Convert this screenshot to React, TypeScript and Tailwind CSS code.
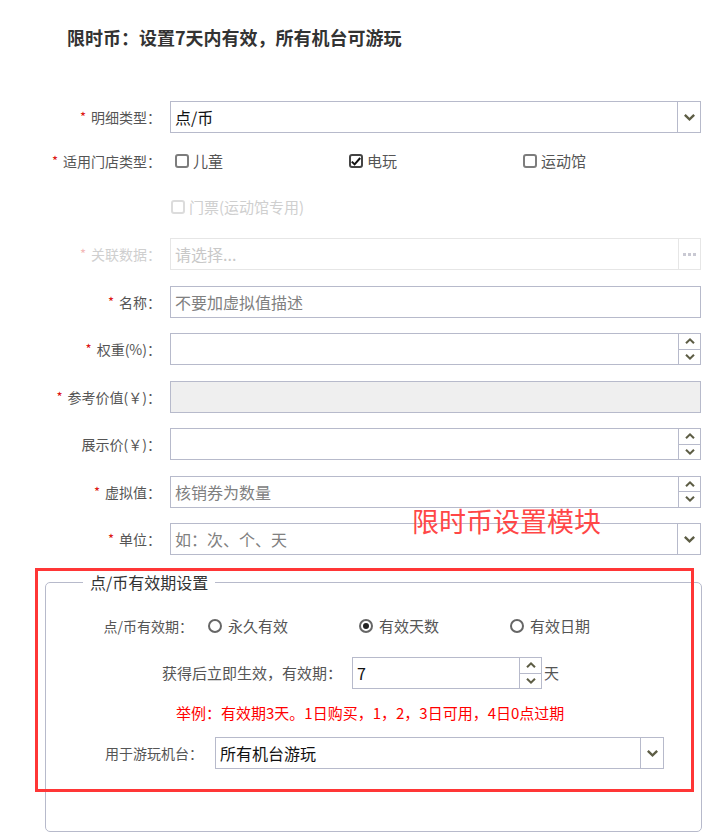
import React from "react";

const BORDER = "border-[#b7bacb]";

function ChevronDown({ w = 11, h = 7 }: { w?: number; h?: number }) {
  return (
    <svg width={w} height={h} viewBox="0 0 11 7">
      <path d="M0 1.7L1.7 0L5.5 3.8L9.3 0L11 1.7L5.5 7Z" fill="#5d5d45" />
    </svg>
  );
}

function ChevronUp({ w = 11, h = 7 }: { w?: number; h?: number }) {
  return (
    <svg width={w} height={h} viewBox="0 0 11 7">
      <path d="M0 5.3L1.7 7L5.5 3.2L9.3 7L11 5.3L5.5 0Z" fill="#5d5d45" />
    </svg>
  );
}

function Label({
  text,
  required,
  disabled,
  width = "w-[161px]",
}: {
  text: string;
  required?: boolean;
  disabled?: boolean;
  width?: string;
}) {
  return (
    <div
      className={`${width} shrink-0 flex justify-end items-center text-[14px] leading-[20px] ${
        disabled ? "text-[#cfcfcf]" : "text-[#555]"
      }`}
    >
      {required && (
        <span
          className={`mr-[5px] text-[13px] ${
            disabled ? "text-[#f3b8b8]" : "text-[#dd1111]"
          }`}
        >
          *
        </span>
      )}
      <span>{text}：</span>
    </div>
  );
}

function Spinner() {
  return (
    <div className={`w-[22px] h-full border-l ${BORDER} flex flex-col shrink-0`}>
      <div className={`flex-1 flex items-center justify-center border-b ${BORDER}`}>
        <ChevronUp w={10} h={6} />
      </div>
      <div className="flex-1 flex items-center justify-center">
        <ChevronDown w={10} h={6} />
      </div>
    </div>
  );
}

function Input({
  value,
  placeholder,
  spinner,
  select,
  gray,
  width = "w-[531px]",
}: {
  value?: string;
  placeholder?: string;
  spinner?: boolean;
  select?: boolean;
  gray?: boolean;
  width?: string;
}) {
  return (
    <div
      className={`${width} h-[32px] border ${BORDER} ${
        gray ? "bg-[#efefef]" : "bg-white"
      } flex items-stretch`}
    >
      <div className="flex-1 flex items-center pl-[4px] text-[16px] leading-[20px]">
        {value ? (
          <span className="text-[#111]">{value}</span>
        ) : placeholder ? (
          <span className="text-[#808080]">{placeholder}</span>
        ) : null}
      </div>
      {spinner && <Spinner />}
      {select && (
        <div className={`w-[23px] border-l ${BORDER} flex items-center justify-center shrink-0`}>
          <ChevronDown />
        </div>
      )}
    </div>
  );
}

function Checkbox({
  label,
  checked,
  disabled,
}: {
  label: string;
  checked?: boolean;
  disabled?: boolean;
}) {
  return (
    <div className="flex items-center">
      <span
        className={`w-[14px] h-[14px] rounded-[3px] border-2 flex items-center justify-center ${
          disabled ? "border-[#dcdcdc]" : checked ? "border-[#444]" : "border-[#7d7d7d]"
        }`}
      >
        {checked && (
          <svg width="10" height="9" viewBox="0 0 10 9">
            <path d="M0.8 4.6L3.6 7.4L9.2 1" stroke="#111" strokeWidth="2" fill="none" />
          </svg>
        )}
      </span>
      <span
        className={`ml-[4px] text-[15px] leading-[20px] ${
          disabled ? "text-[#cfcfcf]" : "text-[#555]"
        }`}
      >
        {label}
      </span>
    </div>
  );
}

function Radio({ label, checked }: { label: string; checked?: boolean }) {
  return (
    <div className="w-[151px] flex items-center">
      <span className="w-[14px] h-[14px] rounded-full border-2 border-[#666] flex items-center justify-center">
        {checked && <span className="w-[6px] h-[6px] rounded-full bg-[#222]" />}
      </span>
      <span className="ml-[6px] text-[15px] leading-[20px] text-[#555]">{label}</span>
    </div>
  );
}

export default function App() {
  return (
    <div className="relative w-[724px] h-[840px] bg-white overflow-hidden font-['Noto_Sans_CJK_SC','Noto_Sans',sans-serif] text-[#555]">
      <div className="pl-[67px] pt-[26px] text-[18px] leading-[22px] font-bold text-[#333]">
        限时币：设置7天内有效，所有机台可游玩
      </div>

      <div className="mt-[53px] flex flex-col gap-[15.5px]">
        <div className="flex items-center h-[32px]">
          <Label text="明细类型" required />
          <div className="ml-[9px]">
            <Input value="点/币" select />
          </div>
        </div>

        <div className="flex items-center h-[25px]">
          <Label text="适用门店类型" required />
          <div className="ml-[14px] flex">
            <div className="w-[174px]">
              <Checkbox label="儿童" />
            </div>
            <div className="w-[174px]">
              <Checkbox label="电玩" checked />
            </div>
            <div className="w-[174px]">
              <Checkbox label="运动馆" />
            </div>
          </div>
        </div>

        <div className="mt-[5.5px] flex items-center h-[25px]">
          <div className="w-[161px] shrink-0" />
          <div className="ml-[10px]">
            <Checkbox label="门票(运动馆专用)" disabled />
          </div>
        </div>

        <div className="mt-[3px] flex items-center h-[32px]">
          <Label text="关联数据" required disabled />
          <div className="ml-[9px] w-[531px] h-[32px] border border-[#e6e6e6] bg-white flex items-stretch">
            <div className="flex-1 flex items-center pl-[4px] text-[16px] leading-[20px] text-[#c8c8c8]">
              请选择...
            </div>
            <div className="w-[22px] border-l border-[#e6e6e6] flex items-center justify-center gap-[2px]">
              <span className="w-[3px] h-[3px] bg-[#c9c9d3]" />
              <span className="w-[3px] h-[3px] bg-[#c9c9d3]" />
              <span className="w-[3px] h-[3px] bg-[#c9c9d3]" />
            </div>
          </div>
        </div>

        <div className="flex items-center h-[32px]">
          <Label text="名称" required />
          <div className="ml-[9px]">
            <Input placeholder="不要加虚拟值描述" />
          </div>
        </div>

        <div className="flex items-center h-[32px]">
          <Label text="权重(%)" required />
          <div className="ml-[9px]">
            <Input spinner />
          </div>
        </div>

        <div className="flex items-center h-[32px]">
          <Label text="参考价值(￥)" required />
          <div className="ml-[9px]">
            <Input gray />
          </div>
        </div>

        <div className="flex items-center h-[32px]">
          <Label text="展示价(￥)" />
          <div className="ml-[9px]">
            <Input spinner />
          </div>
        </div>

        <div className="flex items-center h-[32px]">
          <Label text="虚拟值" required />
          <div className="ml-[9px]">
            <Input placeholder="核销券为数量" spinner />
          </div>
        </div>

        <div className="flex items-center h-[32px]">
          <Label text="单位" required />
          <div className="ml-[9px]">
            <Input placeholder="如：次、个、天" select />
          </div>
        </div>
      </div>

      <fieldset className={`ml-[45px] mt-[17px] w-[657px] border ${BORDER} rounded-[5px] pb-[62px]`}>
        <legend className="ml-[37px] px-[7px] text-[16px] leading-[20px] text-[#333]">
          点/币有效期设置
        </legend>
        <div className="pt-[19px] flex flex-col">
          <div className="flex items-center h-[30px]">
            <Label text="点/币有效期" width="w-[147px]" />
            <div className="ml-[15px] flex">
              <Radio label="永久有效" />
              <Radio label="有效天数" checked />
              <Radio label="有效日期" />
            </div>
          </div>

          <div className="mt-[16px] flex items-center h-[32px]">
            <div className="w-[296px] shrink-0 text-right text-[15px] leading-[20px] text-[#555]">
              获得后立即生效，有效期：
            </div>
            <div className="ml-[10px]">
              <Input value="7" spinner width="w-[190px]" />
            </div>
            <span className="ml-[2px] text-[15px] leading-[20px] text-[#555]">天</span>
          </div>

          <div className="mt-[14px] h-[20px] pl-[130px] text-[15px] leading-[20px] text-[#ff0000]">
            举例：有效期3天。1日购买，1，2，3日可用，4日0点过期
          </div>

          <div className="mt-[14px] flex items-center h-[32px]">
            <Label text="用于游玩机台" width="w-[157px]" />
            <div className="ml-[12px]">
              <Input value="所有机台游玩" select width="w-[449px]" />
            </div>
          </div>
        </div>
      </fieldset>

      <div className="absolute left-[35px] top-[568px] w-[659px] h-[224px] border-[3px] border-[#ff3636]" />
      <div className="absolute left-[412px] top-[504px] text-[27px] leading-[34px] text-[#ff4747]">
        限时币设置模块
      </div>
    </div>
  );
}
